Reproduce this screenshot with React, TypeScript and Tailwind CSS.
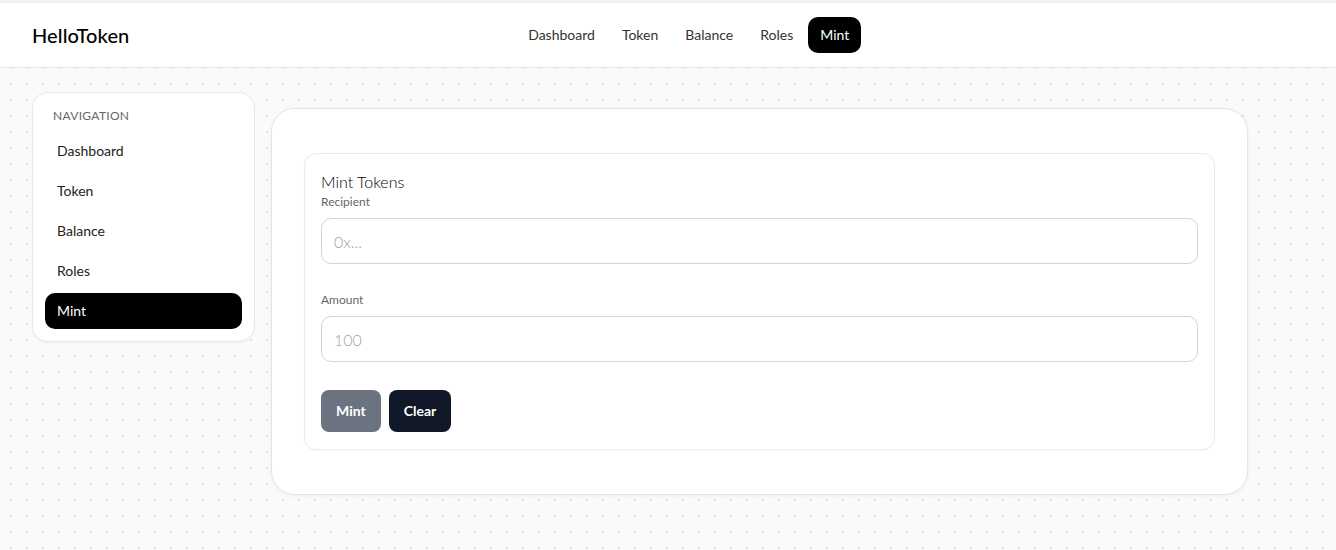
import { useState } from 'react'

const links = ['Dashboard', 'Token', 'Balance', 'Roles', 'Mint']

export default function App() {
  const [active, setActive] = useState('Mint')
  const [recipient, setRecipient] = useState('')
  const [amount, setAmount] = useState('')

  return (
    <div
      className="min-h-screen bg-[#fafafa] bg-[radial-gradient(circle,#e3e3e3_1px,transparent_1.5px)] bg-[size:16px_16px] bg-[position:3px_-4px] text-[#111] font-['Lato','Liberation_Sans',sans-serif]"
    >
      {/* top bar */}
      <header className="border-t-[3px] border-t-[#efefef] border-b border-b-[#e6e6e6] bg-white">
        <div className="flex h-16 items-center justify-between px-8">
          <div className="text-[20px] font-medium tracking-[0.1px] text-black">HelloToken</div>
          <nav className="flex items-center gap-[3px]">
            {links.map((l) => (
              <button
                key={l}
                onClick={() => setActive(l)}
                className={
                  active === l
                    ? 'h-9 rounded-[10px] bg-black px-3 text-sm text-white'
                    : 'h-9 rounded-[10px] px-3 text-sm text-[#333]'
                }
              >
                {l}
              </button>
            ))}
          </nav>
          <div className="w-[56px]" />
        </div>
      </header>

      <div className="max-w-[1280px] px-8 pt-6">
        <div className="grid grid-cols-[223px_1fr] items-start gap-4">
          {/* sidebar */}
          <aside className="rounded-2xl border border-[#e8e8e8] bg-white p-3 shadow-[0_1px_3px_rgba(0,0,0,0.04)]">
            <div className="px-2 pt-[3px] pb-[9px] text-xs uppercase leading-4 tracking-[0.3px] text-[#666]">
              Navigation
            </div>
            <div className="flex flex-col gap-1">
              {links.map((l) => (
                <button
                  key={l}
                  onClick={() => setActive(l)}
                  className={
                    active === l
                      ? 'h-9 rounded-[10px] bg-black px-3 text-left text-sm text-white'
                      : 'h-9 rounded-[10px] px-3 text-left text-sm text-[#222]'
                  }
                >
                  {l}
                </button>
              ))}
            </div>
          </aside>

          {/* main */}
          <main className="mt-4 rounded-3xl border border-[#e6e6e6] bg-white px-8 py-[44px] shadow-[0_1px_4px_rgba(0,0,0,0.05)]">
            <div className="rounded-xl border border-[#ebebeb] bg-white px-4 pt-4 pb-[17px] shadow-[0_1px_2px_rgba(0,0,0,0.03)]">
              <h2 className="text-base font-light leading-6 text-black">Mint Tokens</h2>
              <label className="block text-xs leading-4 text-[#666]">Recipient</label>
              <input
                value={recipient}
                onChange={(e) => setRecipient(e.target.value)}
                placeholder="0x..."
                className="mt-2 h-[46px] w-full rounded-[10px] border border-[#d4d4d8] px-3 text-base font-light outline-none placeholder:text-[#a3a3a3]"
              />
              <label className="mt-7 block text-xs leading-4 text-[#666]">Amount</label>
              <input
                value={amount}
                onChange={(e) => setAmount(e.target.value)}
                placeholder="100"
                className="mt-2 h-[46px] w-full rounded-[10px] border border-[#d4d4d8] px-3 text-base font-light outline-none placeholder:text-[#a3a3a3]"
              />
              <div className="mt-7 flex gap-2">
                <button className="h-[42px] rounded-lg bg-[#6b7280] px-[15px] text-sm font-bold text-white">Mint</button>
                <button
                  onClick={() => {
                    setRecipient('')
                    setAmount('')
                  }}
                  className="h-[42px] rounded-lg bg-[#111827] px-[15px] text-sm font-bold text-white"
                >
                  Clear
                </button>
              </div>
            </div>
          </main>
        </div>
      </div>
    </div>
  )
}
